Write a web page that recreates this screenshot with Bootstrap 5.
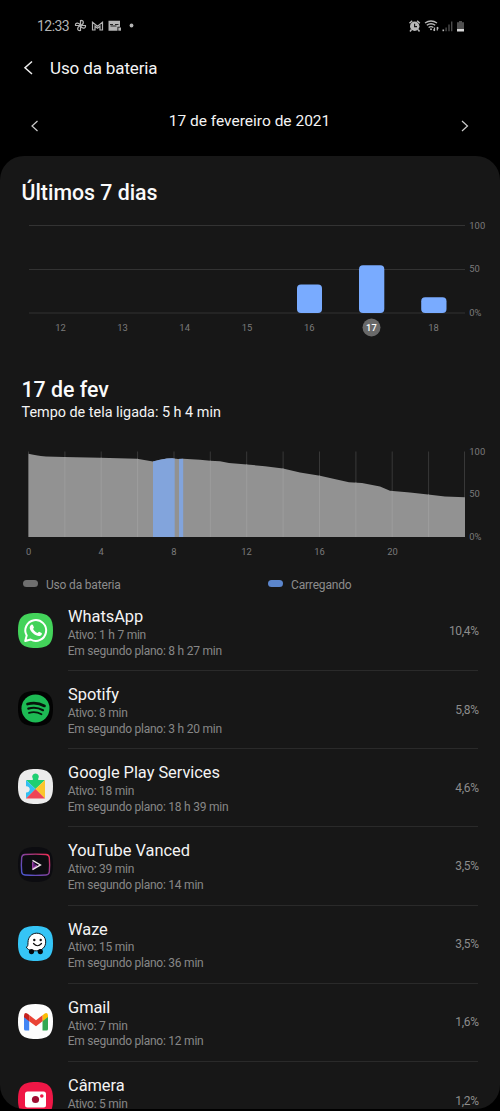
<!DOCTYPE html>
<html lang="pt-BR">
<head>
<meta charset="utf-8">
<meta name="viewport" content="width=device-width, initial-scale=1">
<title>Uso da bateria</title>
<link href="https://cdn.jsdelivr.net/npm/bootstrap@5.3.0/dist/css/bootstrap.min.css" rel="stylesheet">
<style>
  html, body { height: 1111px; overflow: hidden; background: #000; }
  body { font-family: Roboto, sans-serif; color: #f4f4f4; line-height: 1.2; }
  svg { display: block; flex: none; }
  svg text { font-family: Roboto, sans-serif; }
  .status { height: 52px; padding: 0 36px 0 37px; color: #b4b4b4; }
  .clock { font-size: 14px; letter-spacing: -.55px; width: 37px; line-height: 52px; }
  .title-row { height: 32px; padding-left: 23px; }
  .title-row h1 { font-size: 17px; letter-spacing: -.13px; font-weight: 400; margin: 0 0 0 15px; }
  .date-row { height: 72px; padding: 0 31px 0 30px; }
  .date-row span { font-size: 15.5px; margin-top: 3px; }
  .date-row svg { margin-top: 12px; }
  .panel { height: 953px; background: #171717; border-radius: 24px; overflow: hidden; }
  .panel h2 { font-size: 21.3px; font-weight: 500; line-height: 26px; margin: 0; padding-left: 21.500px; color: #fafafa; }
  .screen-on { font-size: 14.4px; line-height: 20px; padding-left: 21.500px; }
  .axis { font-size: 9.4px; fill: #7b7b7b; letter-spacing: .1px; }
  .legend-row { height: 19px; padding-top: 3px; font-size: 12px; letter-spacing: -.18px; color: #8c8c8c; padding-left: 23px; }
  .legend-row > div { width: 245px; flex: none; }
  .swatch { width: 15px; height: 7px; border-radius: 4px; margin: -3px 8px 0 0; background: #6f6f6f; }
  .swatch.charging { background: #5c86cc; }
  .app-row { height: 78.15px; padding: 0 22px 0 18px; }
  .app-icon { margin: 0 15px 3px 0; }
  .app-body { border-bottom: 1px solid #2a2a2a; }
  .app-row:last-child .app-body { border: 0; }
  .app-name { font-size: 16.4px; line-height: 19px; padding-top: 14px; margin-bottom: 1.900px; letter-spacing: -.03px; }
  .app-detail { font-size: 12px; letter-spacing: -.24px; line-height: 15.700px; color: #878787; margin-left: -.3px; }
  .share { font-size: 12px; letter-spacing: -.3px; color: #8c8c8c; margin-right: -.8px; }
</style>
</head>
<body>
<header>
  <div class="status d-flex align-items-center">
    <span class="clock">12:33</span>
    <svg width="98" height="14" viewBox="74 19 98 14" fill="none" stroke="#b4b4b4" stroke-width="1.2">
      <path d="M80.500 25.500V20.500C84 20 84.500 24 80.500 25.500H85.500C86 28.500 82 29.500 80.500 25.500V30.500C77 31 76.500 27.500 80.500 25.500H75.500C75 22.500 79 22 80.500 25.500"/>
      <path d="M92.500 30V22.300L97.500 26.200L102.500 22.300V30H100V26.300L97.500 28.300L95 26.300V30Z"/>
      <path d="M108.500 20.700h11.500v6h-2.500v4h-9z" fill="#b4b4b4" stroke="none"/>
      <path d="M118.300 27.500h2.700v3.200h-2.700z" fill="#b4b4b4" stroke="none"/>
      <path d="M110 24.500h3M115 24.500h3.500M110.500 26h6" stroke="#222" stroke-width="1"/>
      <circle cx="131.500" cy="25.500" r="1.900" fill="#b4b4b4" stroke="none"/>
    </svg>
    <svg class="ms-auto" width="57" height="14" viewBox="407 18 57 14">
      <g fill="none" stroke="#b8b8b8">
        <path d="M409.500 22.300l2.700-2.500M419.800 22.300l-2.700-2.500M411.500 28.500l-1.500 2M418 28.500l1.500 2" stroke-width="1.500"/>
        <circle cx="414.700" cy="25.200" r="4.700" fill="#b8b8b8" stroke="none"/>
        <path d="M414.600 22.700v2.900h2.400" stroke="#111" stroke-width="1.100"/>
        <path d="M425 22q6-4 12 0M426.800 24.300q4.200-3 8.400 0M428.600 26.500q2.400-1.800 4.800 0" stroke-width="1.400"/>
        <circle cx="431" cy="28.300" r="1" fill="#b8b8b8" stroke="none"/>
        <path d="M434.500 26.500v3.500M433.300 28.500l1.200 1.500M437.300 29.500v-3.500M438.400 27.500l-1.100-1.500" stroke-width="1.200"/>
      </g>
      <path d="M442.500 28.500h1.600v1.700h-1.600z" fill="#b8b8b8"/>
      <path d="M445.400 26.500h1.400v3.700h-1.400zM448.300 23.500h1.400v6.700h-1.400zM451 20.500h1.400v9.700H451z" fill="#4b4b4b"/>
      <path d="M459 20h3v1.300h2v7h-7v-7h2z" fill="#4f4f4f"/>
      <path d="M457 28h7v2.500h-7z" fill="#d8d8d8"/>
    </svg>
  </div>
  <div class="title-row d-flex align-items-center">
    <svg width="12" height="16" viewBox="0 0 12 16" fill="none" stroke="#eee" stroke-width="1.500"><path d="M9 1.500L2 7.700L9 14"/></svg>
    <h1>Uso da bateria</h1>
  </div>
  <div class="date-row d-flex align-items-center justify-content-between">
    <svg width="9" height="12" viewBox="0 0 9 12" fill="none" stroke="#ccc" stroke-width="1.200"><path d="M7.500 1L2 6L7.500 11"/></svg>
    <span>17 de fevereiro de 2021</span>
    <svg width="9" height="12" viewBox="0 0 9 12" fill="none" stroke="#ccc" stroke-width="1.200"><path d="M2 1L7.500 6L2 11"/></svg>
  </div>
</header>

<main class="panel">
  <h2 style="padding-top:24px">Últimos 7 dias</h2>
  <svg width="500" height="171" viewBox="0 206 500 171">
    <path d="M29 225.500H465M29 269.500H465M29 313H465" stroke="#333" stroke-width="1"/>
    <g fill="#79abff">
      <rect x="297" y="284.500" width="25" height="28.500" rx="4"/>
      <rect x="359" y="265.300" width="25.300" height="47.700" rx="4"/>
      <rect x="421.200" y="297.300" width="25.300" height="15.700" rx="4"/>
    </g>
    <g class="axis" text-anchor="middle">
      <text x="60.500" y="331">12</text><text x="122.500" y="331">13</text><text x="184.700" y="331">14</text>
      <text x="247" y="331">15</text><text x="309.300" y="331">16</text>
      <circle cx="371.500" cy="327.500" r="9" fill="#696969"/>
      <text x="371.500" y="331" fill="#fff" font-weight="500">17</text>
      <text x="433.600" y="331">18</text>
    </g>
    <g class="axis"><text x="469.200" y="228.500">100</text><text x="469.200" y="272.200">50</text><text x="469.200" y="316.200">0%</text></g>
  </svg>
  <h2>17 de fev</h2>
  <div class="screen-on">Tempo de tela ligada: 5 h 4 min</div>
  <svg width="500" height="151" viewBox="0 423 500 151">
    <defs>
      <path id="level" d="M28.500 537V453.800Q35 455.500 46 456.500L64 457L100 457.800L137 458.700L153 461.500Q160 459.500 167 458.500L172 458.200L178 459L183 458.700L200 459.800L210 460.800L220 461.300L229 463L250 464.800L265 466.200L283 468.600L300 472.500L320 475.800L330 478L349 482.300L362 483L380 486.500L390 490.800L410 492.500L428 494.500L445 496.500L465 497.300V537Z"/>
      <clipPath id="under"><use href="#level"/></clipPath>
    </defs>
    <path d="M28.500 451.500V537M64.900 451.500V537M101.200 451.500V537M137.600 451.500V537M174 451.500V537M210.300 451.500V537M246.700 451.500V537M283.100 451.500V537M319.500 451.500V537M355.900 451.500V537M392.200 451.500V537M428.600 451.500V537M464.500 451.500V537" stroke="#383838"/>
    <use href="#level" fill="#929292"/>
    <g clip-path="url(#under)">
      <path d="M153 450h21.700v87H153zM179 450h4.200v87H179z" fill="#82a4dc"/>
      <path d="M64.900 451.500V537M101.200 451.500V537M137.600 451.500V537M210.300 451.500V537M246.700 451.500V537M283.100 451.500V537M319.500 451.500V537M355.900 451.500V537M392.200 451.500V537M428.600 451.500V537" stroke="#9d9d9d"/>
    </g>
    <g class="axis" text-anchor="middle">
      <text x="28.700" y="554.500">0</text><text x="101.200" y="554.500">4</text><text x="174" y="554.500">8</text>
      <text x="246.500" y="554.500">12</text><text x="319.500" y="554.500">16</text><text x="392.500" y="554.500">20</text>
    </g>
    <g class="axis"><text x="469.200" y="455">100</text><text x="469.200" y="497.300">50</text><text x="469.200" y="539.500">0%</text></g>
  </svg>
  <div class="legend-row d-flex">
    <div class="d-flex align-items-center"><i class="swatch"></i>Uso da bateria</div>
    <div class="d-flex align-items-center"><i class="swatch charging"></i>Carregando</div>
  </div>

  <section>
    <article class="app-row d-flex align-items-center">
      <svg class="app-icon" width="35" height="35" viewBox="0 0 35 35">
        <defs><path id="tile" d="M17.500 0C30.500 0 35 4.500 35 17.500S30.500 35 17.500 35S0 30.500 0 17.500S4.500 0 17.500 0Z"/></defs>
        <use href="#tile" fill="#43d35a"/>
        <path d="M7.200 28L8.700 22.600A10.400 10.400 0 1 1 12.600 26.500Z" fill="none" stroke="#fff" stroke-width="2" stroke-linejoin="round"/>
        <path d="M13.300 11.800c.6-.5 1.300-.4 1.600.2l1 2.300c.2.600-.9 1.500-.8 1.800.9 1.900 2.300 3.100 4.300 3.900.5.100 1.200-1.500 1.700-1.300l2.500 1.200c.8.400-.1 2.400-1.200 2.900-1.800.9-4.800-.2-7.400-2.500-3.700-3.500-4.300-6.500-1.700-8.500z" fill="#fff"/>
      </svg>
      <div class="app-body d-flex flex-grow-1 h-100 justify-content-between">
        <div><div class="app-name">WhatsApp</div><div class="app-detail">Ativo: 1 h 7 min</div><div class="app-detail">Em segundo plano: 8 h 27 min</div></div>
        <span class="share align-self-center">10,4%</span>
      </div>
    </article>
    <article class="app-row d-flex align-items-center">
      <svg class="app-icon" width="35" height="35" viewBox="0 0 35 35">
        <use href="#tile" fill="#030303"/><circle cx="17.500" cy="17.500" r="14" fill="#1dba54"/>
        <g fill="none" stroke="#07150b" stroke-linecap="round"><path d="M9.500 13.100Q18.500 10.500 26.500 15" stroke-width="2.600"/><path d="M10.300 17.600Q18 15.300 25 19.200" stroke-width="2.200"/><path d="M11 21.900Q17.500 20 23.500 23.200" stroke-width="1.800"/></g>
      </svg>
      <div class="app-body d-flex flex-grow-1 h-100 justify-content-between">
        <div><div class="app-name">Spotify</div><div class="app-detail">Ativo: 8 min</div><div class="app-detail">Em segundo plano: 3 h 20 min</div></div>
        <span class="share align-self-center">5,8%</span>
      </div>
    </article>
    <article class="app-row d-flex align-items-center">
      <svg class="app-icon" width="35" height="35" viewBox="0 0 35 35">
        <use href="#tile" fill="#ececec"/>
        <path d="M8 11h6.800V9.500a3.200 3.200 0 1 1 5.400 0V11H27L17.500 20Z" fill="#1fcf72"/>
        <path d="M8 11L17.500 20L8 29.500V23.500a3.200 3.200 0 1 0 0-6.300Z" fill="#31bff2"/>
        <path d="M27 11V29.500L17.500 20Z" fill="#fbc62c"/>
        <path d="M8 29.500L17.500 20L27 29.500Z" fill="#ee4456"/>
      </svg>
      <div class="app-body d-flex flex-grow-1 h-100 justify-content-between">
        <div><div class="app-name">Google Play Services</div><div class="app-detail">Ativo: 18 min</div><div class="app-detail">Em segundo plano: 18 h 39 min</div></div>
        <span class="share align-self-center">4,6%</span>
      </div>
    </article>
    <article class="app-row d-flex align-items-center">
      <svg class="app-icon" width="35" height="35" viewBox="0 0 35 35">
        <defs><linearGradient id="vanced" x1="0" y1="1" x2="1" y2="0"><stop offset="0" stop-color="#4759d8"/><stop offset=".5" stop-color="#80409a"/><stop offset="1" stop-color="#f12b50"/></linearGradient></defs>
        <use href="#tile" fill="#0c0c10"/>
        <path d="M7 7.500Q17.500 6.700 28 7.500Q31 7.700 31.300 10.500Q32 18 31.300 25Q31 27.800 28 28Q17.500 28.800 7 28Q4 27.800 3.700 25Q3 18 3.700 10.500Q4 7.700 7 7.500Z" fill="none" stroke="url(#vanced)" stroke-width="1.400"/>
        <path d="M14.700 14.800V21.500L19 18.400" fill="#562070" stroke="#a24bad" stroke-width="1.200"/>
        <path d="M14.500 13.400L22.500 17.900L14.500 22.600" fill="none" stroke="#f5e7ed" stroke-width="1.300"/>
      </svg>
      <div class="app-body d-flex flex-grow-1 h-100 justify-content-between">
        <div><div class="app-name">YouTube Vanced</div><div class="app-detail">Ativo: 39 min</div><div class="app-detail">Em segundo plano: 14 min</div></div>
        <span class="share align-self-center">3,5%</span>
      </div>
    </article>
    <article class="app-row d-flex align-items-center">
      <svg class="app-icon" width="35" height="35" viewBox="0 0 35 35">
        <use href="#tile" fill="#35c5f6"/>
        <path d="M18.500 7.200c5.200 0 9.200 3.600 9.200 8.700 0 5-3.600 8.900-9 8.900h-5c-2.500-.5-4.500-1.900-5.400-3.700 1.600-.5 1.700-2 1.700-4.700 0-5.200 3.700-9.200 8.500-9.200z" fill="#fff" stroke="#10161b" stroke-width="1"/>
        <circle cx="13.500" cy="25.600" r="2.600" fill="#05090c"/><circle cx="22.300" cy="25.600" r="2.600" fill="#05090c"/>
        <circle cx="16.300" cy="14" r="1.200" fill="#111"/><circle cx="22.700" cy="14" r="1.200" fill="#111"/>
        <path d="M15.500 17.500Q19.500 22 23.500 17.500" fill="none" stroke="#111" stroke-width="1.200" stroke-linecap="round"/>
      </svg>
      <div class="app-body d-flex flex-grow-1 h-100 justify-content-between">
        <div><div class="app-name">Waze</div><div class="app-detail">Ativo: 15 min</div><div class="app-detail">Em segundo plano: 36 min</div></div>
        <span class="share align-self-center">3,5%</span>
      </div>
    </article>
    <article class="app-row d-flex align-items-center">
      <svg class="app-icon" width="35" height="35" viewBox="0 0 35 35">
        <use href="#tile" fill="#fdfdfd"/>
        <path d="M6 12L11.200 16V26.500H7.500Q6 26.500 6 25Z" fill="#4285f4"/>
        <path d="M24.500 16L30 12V25Q30 26.500 28.500 26.500H24.500Z" fill="#34a853"/>
        <path d="M24.500 11.500L26 10Q30 7.500 30 12V13L24.500 17.200Z" fill="#fbbc04"/>
        <path d="M11.200 11L18 16.200L24.500 11.200V17.200L18 22.200L11.200 17.200Z" fill="#ea4335"/>
        <path d="M6 12Q6 7.500 10 10L11.200 11V17.200L6 13.200Z" fill="#c5221f"/>
      </svg>
      <div class="app-body d-flex flex-grow-1 h-100 justify-content-between">
        <div><div class="app-name">Gmail</div><div class="app-detail">Ativo: 7 min</div><div class="app-detail">Em segundo plano: 12 min</div></div>
        <span class="share align-self-center">1,6%</span>
      </div>
    </article>
    <article class="app-row d-flex align-items-center">
      <svg class="app-icon" width="35" height="35" viewBox="0 0 35 35">
        <use href="#tile" fill="#ef1746"/>
        <rect x="7" y="9.500" width="21" height="16" rx="2.500" fill="#fff"/>
        <circle cx="17.500" cy="17.500" r="3.600" fill="#a00d32"/><circle cx="23.800" cy="14" r="1.800" fill="#ef1746"/>
      </svg>
      <div class="app-body d-flex flex-grow-1 h-100 justify-content-between">
        <div><div class="app-name">Câmera</div><div class="app-detail">Ativo: 5 min</div></div>
        <span class="share align-self-center">1,2%</span>
      </div>
    </article>
  </section>
</main>
<script src="https://cdn.jsdelivr.net/npm/bootstrap@5.3.0/dist/js/bootstrap.bundle.min.js"></script>
</body>
</html>
